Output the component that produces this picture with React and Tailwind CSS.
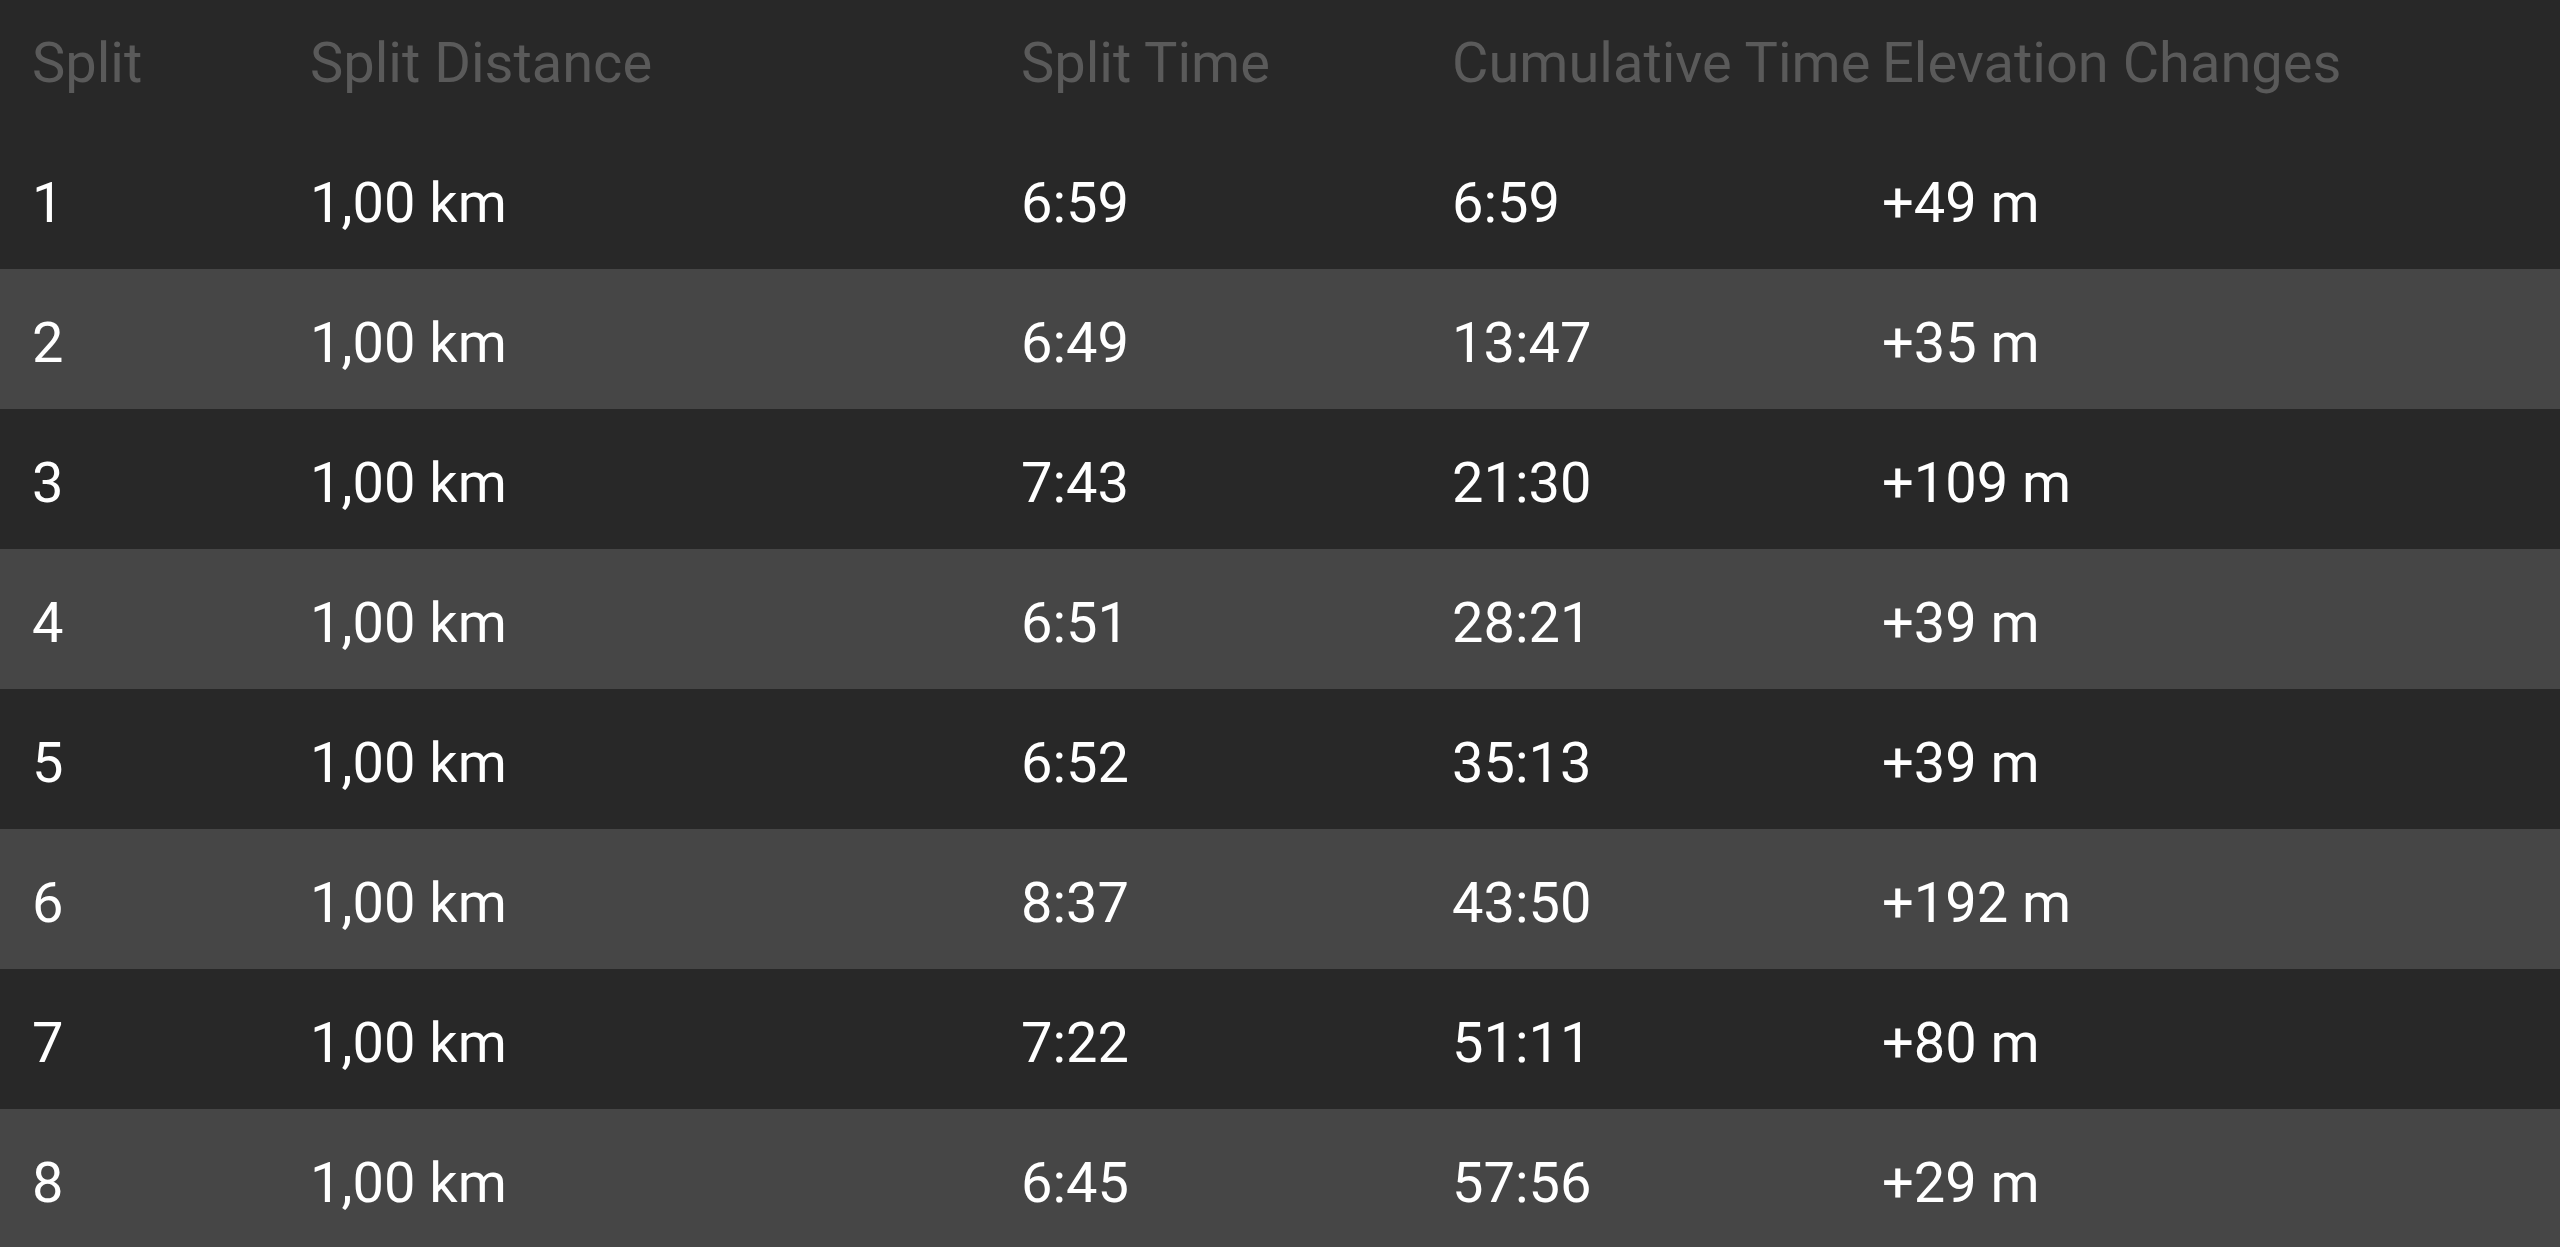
const rows = [
  ["1", "1,00 km", "6:59", "6:59", "+49 m"],
  ["2", "1,00 km", "6:49", "13:47", "+35 m"],
  ["3", "1,00 km", "7:43", "21:30", "+109 m"],
  ["4", "1,00 km", "6:51", "28:21", "+39 m"],
  ["5", "1,00 km", "6:52", "35:13", "+39 m"],
  ["6", "1,00 km", "8:37", "43:50", "+192 m"],
  ["7", "1,00 km", "7:22", "51:11", "+80 m"],
  ["8", "1,00 km", "6:45", "57:56", "+29 m"],
];

const headers = ["Split", "Split Distance", "Split Time", "Cumulative Time", "Elevation Changes"];

export default function App() {
  return (
    <div
      className="w-[2560px] h-[1247px] overflow-hidden bg-[#282828] text-[56px] leading-none"
      style={{ fontFamily: "Roboto, 'Noto Sans', sans-serif" }}
    >
      <div className="grid grid-cols-[310px_711px_431px_430px_1fr] h-[129px] pb-[4px] items-center text-[#5a5a5a]">
        {headers.map((h, i) => (
          <div key={i} className={i === 0 ? "pl-[32px] whitespace-nowrap" : "whitespace-nowrap"}>
            {h}
          </div>
        ))}
      </div>
      {rows.map((r, idx) => (
        <div
          key={idx}
          className={
            "grid grid-cols-[310px_711px_431px_430px_1fr] h-[140px] pt-[8px] items-center text-white " +
            (idx % 2 === 0 ? "bg-[#282828]" : "bg-[#464646]")
          }
        >
          {r.map((c, i) => (
            <div key={i} className={i === 0 ? "pl-[32px] whitespace-nowrap" : "whitespace-nowrap"}>
              {c}
            </div>
          ))}
        </div>
      ))}
    </div>
  );
}
